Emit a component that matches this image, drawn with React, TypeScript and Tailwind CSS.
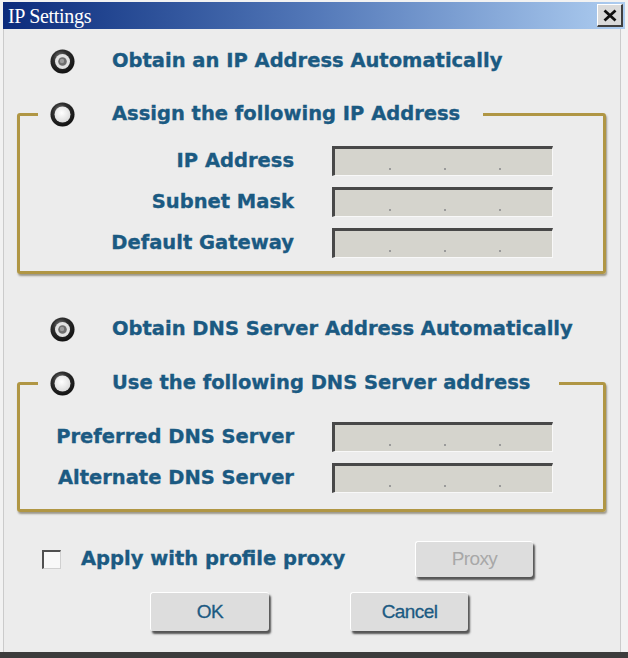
import React from "react";

const labelFont = { fontFamily: '"DejaVu Sans", Verdana, sans-serif' };
const labelCls =
  "whitespace-nowrap text-[19.5px] font-bold leading-none text-[#1b5a82] [-webkit-text-stroke:0.35px_#1b5a82]";

function Radio({ checked }: { checked: boolean }) {
  const id = checked ? "rg-on" : "rg-off";
  return (
    <svg width="27" height="27" viewBox="0 0 27 27" className="-ml-[1px] shrink-0">
      <defs>
        <radialGradient id={id} cx="42%" cy="35%" r="62%">
          <stop offset="0%" stopColor="#8c8c8c" />
          <stop offset="50%" stopColor="#2e2e2e" />
          <stop offset="100%" stopColor="#141414" />
        </radialGradient>
        <radialGradient id={id + "-in"} cx="45%" cy="40%" r="60%">
          <stop offset="0%" stopColor="#ffffff" />
          <stop offset="100%" stopColor="#dcdcdc" />
        </radialGradient>
      </defs>
      <circle cx="13.5" cy="13.5" r="12.5" fill="#e0e0e0" />
      <circle cx="13.5" cy="13.5" r="12" fill={`url(#${id})`} />
      {checked ? (
        <>
          <circle cx="13.5" cy="13.5" r="7.5" fill="#e2e2e2" />
          <circle cx="13.5" cy="13.5" r="4.3" fill="#6e6e6e" />
          <circle cx="13" cy="13" r="2.2" fill="#9c9c9c" />
        </>
      ) : (
        <circle cx="13.5" cy="13.5" r="8" fill={`url(#${id}-in)`} />
      )}
    </svg>
  );
}

function IpBox() {
  return (
    <div className="flex h-[30px] w-[221px] items-end gap-[53px] border-t-[3px] border-l-[3px] border-r border-b border-t-[#484848] border-l-[#484848] border-r-[#f8f8f8] border-b-[#f8f8f8] bg-[#d5d4cd] pb-[5px] pl-[54px]">
      <span className="h-[2px] w-[2px] bg-[#9a9a9a]" />
      <span className="h-[2px] w-[2px] bg-[#9a9a9a]" />
      <span className="h-[2px] w-[2px] bg-[#9a9a9a]" />
    </div>
  );
}

function OptionRow({ checked, text }: { checked: boolean; text: string }) {
  return (
    <div className="flex h-[30px] items-center gap-[36px]">
      <Radio checked={checked} />
      <span className={labelCls} style={labelFont}>
        {text}
      </span>
    </div>
  );
}

function Group({
  title,
  fields,
  top,
  bottom,
  tail,
}: {
  title: string;
  fields: string[];
  top: string;
  bottom: string;
  tail: string;
}) {
  return (
    <fieldset className="ml-[13px] w-[589px] rounded-[3px] border-[3px] border-[#b09644] shadow-[1px_2px_2px_rgba(60,50,20,0.45)]">
      <legend className={`ml-[18px] pl-[12px] ${tail}`}>
        <OptionRow checked={false} text={title} />
      </legend>
      <div className={`grid grid-cols-[274px_221px] gap-x-[38px] gap-y-[11px] ${top} ${bottom}`}>
        {fields.map((f) => (
          <React.Fragment key={f}>
            <div className={`flex h-[30px] items-center justify-end ${labelCls}`} style={labelFont}>
              {f}
            </div>
            <IpBox />
          </React.Fragment>
        ))}
      </div>
    </fieldset>
  );
}

function Button({ children, w, disabled }: { children: React.ReactNode; w: string; disabled?: boolean }) {
  return (
    <div
      className={`flex items-center justify-center rounded-[3px] border-t border-l border-t-white border-l-white bg-[#dddddd] shadow-[2px_3px_2px_#555555] ${w} text-[19px] tracking-[-0.6px] ${
        disabled ? "text-[#a8a8a8]" : "text-[#1b5a82] [-webkit-text-stroke:0.3px_#1b5a82]"
      }`}
      style={{ fontFamily: '"Liberation Sans", Arial, sans-serif' }}
    >
      {children}
    </div>
  );
}

export default function App() {
  return (
    <div className="flex h-[658px] w-[628px] flex-col overflow-hidden bg-[#f2f2f2]">
      <div className="mx-[3px] mt-[2px] flex h-[27px] shrink-0 items-center justify-between bg-linear-to-r from-[#0c2b7c] via-[#5378b8] to-[#aecdf0] pl-[5px] pr-[2px]">
        <span
          className="text-[20px] leading-none tracking-[-0.3px] text-white"
          style={{ fontFamily: '"Liberation Serif", "Times New Roman", serif' }}
        >
          IP Settings
        </span>
        <div className="flex h-[23px] w-[26px] items-center justify-center border-t border-l border-r-2 border-b-2 border-t-white border-l-white border-r-[#404040] border-b-[#404040] bg-[#dadada]">
          <svg width="14" height="13" viewBox="0 0 14 13">
            <path d="M1.5 1.5 L12.5 11.5 M12.5 1.5 L1.5 11.5" stroke="#111" strokeWidth="2.8" />
          </svg>
        </div>
      </div>

      <div className="ml-[3px] mr-[7px] flex flex-1 flex-col border-l border-r border-l-[#cbcbcb] border-r-[#cbcbcb] bg-[#ececec]">
        <div className="mt-[17px] pl-[46px]">
          <OptionRow checked text="Obtain an IP Address Automatically" />
        </div>

        <div className="mt-[23px]">
          <Group
            title="Assign the following IP Address"
            fields={["IP Address", "Subnet Mask", "Default Gateway"]}
            top="mt-[17px]"
            bottom="mb-[13px]"
            tail="pr-[23px]"
          />
        </div>

        <div className="mt-[40px] pl-[46px]">
          <OptionRow checked text="Obtain DNS Server Address Automatically" />
        </div>

        <div className="mt-[24px]">
          <Group
            title="Use the following DNS Server address"
            fields={["Preferred DNS Server", "Alternate DNS Server"]}
            top="mt-[24px]"
            bottom="mb-[16px]"
            tail="pr-[29px]"
          />
        </div>

        <div className="mt-[29px] flex h-[36px] pl-[38px]">
          <div className="flex w-[373px] items-center gap-[20px]">
            <div className="h-[19px] w-[19px] border-t-2 border-l-2 border-r border-b border-t-[#505050] border-l-[#505050] border-r-[#d0d0d0] border-b-[#d0d0d0] bg-[#f8f8f8]" />
            <span className={labelCls} style={labelFont}>
              Apply with profile proxy
            </span>
          </div>
          <Button w="w-[118px]" disabled>
            Proxy
          </Button>
        </div>

        <div className="mt-[15px] flex h-[39px] gap-[81px] pl-[146px]">
          <Button w="w-[119px]">OK</Button>
          <Button w="w-[118px]">Cancel</Button>
        </div>
      </div>

      <div className="h-[6px] shrink-0 bg-[#3c3c3c]" />
    </div>
  );
}
